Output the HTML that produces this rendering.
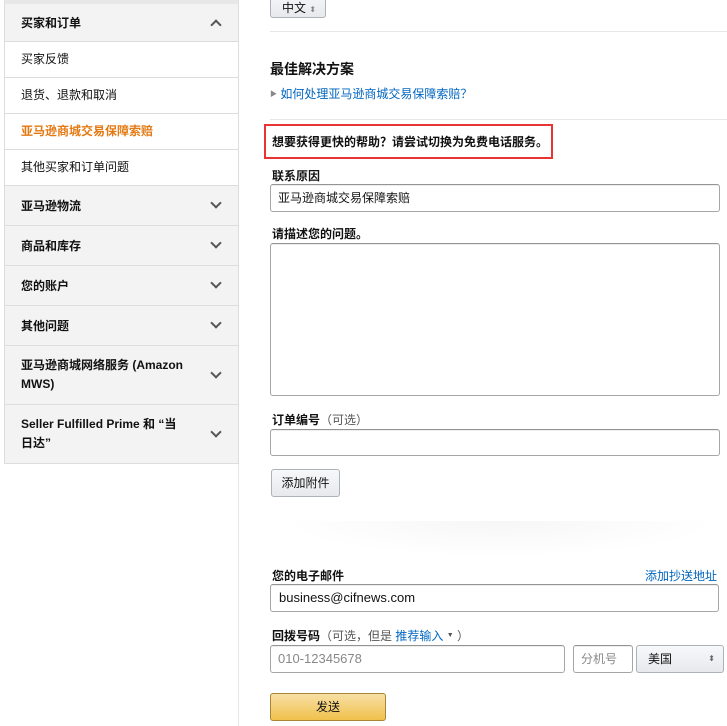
<!DOCTYPE html>
<html><head><meta charset="utf-8"><style>
*{box-sizing:border-box;margin:0;padding:0}
body{width:727px;height:726px;overflow:hidden;background:#fff;font-family:"Liberation Sans","Noto Sans CJK SC",sans-serif;font-size:12px;color:#111;position:relative}
.a{position:absolute}
.side{left:4px;top:0;width:235px;border:1px solid #ddd;border-top:4px solid #e7e7e7}
.h{background:#f3f3f3;font-weight:bold;padding:0 16px;display:flex;align-items:center;justify-content:space-between;border-bottom:1px solid #ddd;font-size:12px}
.h.last{border-bottom:none}
.s{padding:0 16px;height:36px;line-height:35px;border-bottom:1px solid #ddd;font-size:12px}
.chev{width:8px;height:8px;border-right:2px solid #555;border-bottom:2px solid #555;transform:rotate(45deg);margin-top:-5px;margin-right:2px}
.chev.up{transform:rotate(-135deg);margin-top:5px}
.inp{border:1px solid #a6a6a6;border-top-color:#949494;border-radius:3px;background:#fff;box-shadow:inset 0 1px 0 rgba(0,0,0,.07)}
.lbl{font-weight:bold;font-size:12px}
.gray{color:#555;font-weight:normal}
.btn{border:1px solid #adb1b8;border-radius:3px;background:linear-gradient(#f7f8fa,#e7e9ec);text-align:center;font-size:12px}
.blue{color:#0066c0}
</style></head><body>
<div class="a" style="left:238px;top:0;width:1px;height:726px;background:#e7e7e7"></div>
<div class="a side">
<div class="h" style="height:38px">买家和订单<div class="chev up"></div></div>
<div class="s">买家反馈</div>
<div class="s">退货、退款和取消</div>
<div class="s" style="color:#e47911;font-weight:bold">亚马逊商城交易保障索赔</div>
<div class="s">其他买家和订单问题</div>
<div class="h" style="height:40px">亚马逊物流<div class="chev"></div></div>
<div class="h" style="height:40px">商品和库存<div class="chev"></div></div>
<div class="h" style="height:40px">您的账户<div class="chev"></div></div>
<div class="h" style="height:40px">其他问题<div class="chev"></div></div>
<div class="h" style="height:59px;line-height:19px"><span>亚马逊商城网络服务 (Amazon<br>MWS)</span><div class="chev"></div></div>
<div class="h last" style="height:58px;line-height:19px"><span>Seller Fulfilled Prime 和 “当<br>日达”</span><div class="chev"></div></div>
</div>

<div class="a btn" style="left:270px;top:-10px;width:56px;height:28px;line-height:34px;text-align:left;padding-left:11px">中文 <span style="font-size:8px;color:#888">⬍</span></div>
<div class="a" style="left:270px;top:31px;width:457px;height:1px;background:#e7e7e7"></div>
<div class="a" style="left:270px;top:59px;font-size:14px;font-weight:bold">最佳解决方案</div>
<div class="a" style="left:270px;top:85px;font-size:12px"><span style="color:#888;font-size:7px;vertical-align:2px">▶</span> <span class="blue">如何处理亚马逊商城交易保障索赔？</span></div>
<div class="a" style="left:270px;top:119px;width:457px;height:1px;background:#e7e7e7"></div>
<div class="a" style="left:264px;top:124px;width:289px;height:35px;border:2px solid #ea3333"></div>
<div class="a lbl" style="left:272px;top:133px">想要获得更快的帮助？请尝试切换为免费电话服务。</div>
<div class="a lbl" style="left:272px;top:167px">联系原因</div>
<div class="a inp" style="left:270px;top:184px;width:450px;height:28px;line-height:26px;padding-left:7px">亚马逊商城交易保障索赔</div>
<div class="a lbl" style="left:272px;top:225px">请描述您的问题。</div>
<div class="a inp" style="left:270px;top:243px;width:450px;height:153px"></div>
<div class="a lbl" style="left:272px;top:411px">订单编号<span class="gray">（可选）</span></div>
<div class="a inp" style="left:270px;top:429px;width:450px;height:27px"></div>
<div class="a btn" style="left:271px;top:469px;width:69px;height:28px;line-height:26px">添加附件</div>
<div class="a" style="left:280px;top:521px;width:440px;height:36px;background:radial-gradient(ellipse at 50% 0%,rgba(0,0,0,.035),rgba(0,0,0,0) 70%)"></div>
<div class="a lbl" style="left:272px;top:567px">您的电子邮件</div>
<div class="a blue" style="left:645px;top:567px">添加抄送地址</div>
<div class="a inp" style="left:270px;top:584px;width:449px;height:28px;line-height:26px;padding-left:8px;font-size:13px">business@cifnews.com</div>
<div class="a lbl" style="left:272px;top:627px">回拨号码<span class="gray">（可选，但是 <span class="blue">推荐输入</span> <span style="font-size:7px;vertical-align:3px">▼</span> ）</span></div>
<div class="a inp" style="left:270px;top:645px;width:295px;height:28px;line-height:26px;padding-left:7px;color:#888;font-size:13px">010-12345678</div>
<div class="a inp" style="left:573px;top:645px;width:60px;height:28px;line-height:26px;padding-left:7px;color:#888;overflow:hidden;white-space:nowrap">分机号</div>
<div class="a btn" style="left:636px;top:645px;width:88px;height:28px;line-height:26px;text-align:left;padding-left:11px">美国<span style="position:absolute;right:8px;font-size:8px;color:#666">⬍</span></div>
<div class="a" style="left:270px;top:693px;width:116px;height:28px;line-height:26px;text-align:center;border:1px solid #a88734;border-radius:3px;background:linear-gradient(#f7dfa5,#f0c14b)">发送</div>
</body></html>
